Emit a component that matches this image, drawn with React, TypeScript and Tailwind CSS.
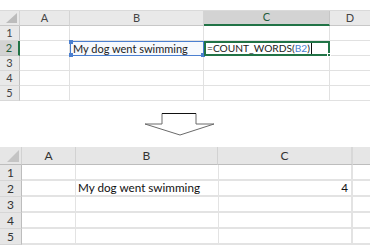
import React from 'react';

const font = { fontFamily: 'Lato, "Open Sans", sans-serif' };

function TopSheet() {
  const rows = [1, 2, 3, 4, 5];
  return (
    <div className="text-[11px] text-[#222]">
      {/* formula bar edge */}
      <div className="h-[11px] border-b border-[#dadada] bg-white" />

      {/* column headers */}
      <div className="flex h-[15px] bg-[#e9e9e9] text-[11px] text-[#444]">
        <div className="relative w-[20px] shrink-0 border-r border-[#d4d4d4] border-b border-b-[#c8c8c8]">
          <svg className="absolute right-[2px] bottom-[2px]" width="11" height="10" viewBox="0 0 11 10">
            <polygon points="11,0 11,10 0,10" fill="#bcbcbc" />
          </svg>
        </div>
        <div className="flex w-[50px] shrink-0 items-center justify-center border-r border-[#d4d4d4] border-b border-b-[#c8c8c8]">A</div>
        <div className="flex w-[134px] shrink-0 items-center justify-center border-r border-[#d4d4d4] border-b border-b-[#c8c8c8]">B</div>
        <div className="flex w-[126px] shrink-0 items-center justify-center border-r border-[#c6c6c6] border-b-2 border-b-[#217346] bg-[#d3d3d3] text-[#1f5c3a]">C</div>
        <div className="flex flex-1 items-center justify-center border-b border-b-[#c8c8c8]">D</div>
      </div>

      {rows.map((r) => {
        const sel = r === 2;
        return (
          <div key={r} className="flex h-[15px]">
            <div
              className={
                sel
                  ? 'flex w-[20px] shrink-0 items-center justify-center border-r-2 border-[#217346] border-b border-b-[#c8c8c8] bg-[#d3d3d3] text-[11px] text-[#1f5c3a]'
                  : 'flex w-[20px] shrink-0 items-center justify-center border-r border-[#c0c0c0] border-b border-b-[#d8d8d8] bg-[#e9e9e9] text-[11px] text-[#444]'
              }
            >
              {r}
            </div>
            <div className="w-[50px] shrink-0 border-r border-[#e1e1e1] border-b border-b-[#e1e1e1]" />
            {sel ? (
              <>
                <div className="relative flex w-[134px] shrink-0 items-center border border-[#4a7fd0] bg-[#f6f9fd] pl-[2px] leading-none">
                  <span className="absolute -left-[2px] -top-[2px] h-[4px] w-[4px] bg-[#4a7fd0]" />
                  <span className="absolute -left-[2px] -bottom-[2px] h-[4px] w-[4px] bg-[#4a7fd0]" />
                  <span className="absolute -right-[2px] -bottom-[2px] h-[4px] w-[4px] bg-[#4a7fd0]" />
                  My dog went swimming
                </div>
                <div className="relative flex w-[126px] shrink-0 items-center border-2 border-[#217346] pl-[1px] text-[10.2px] leading-none">
                  =COUNT_WORDS(<span className="text-[#4a7fd0]">B2</span>)
                  <span className="ml-[1px] h-[11px] w-px bg-[#111]" />
                  <span className="absolute -right-[3px] -bottom-[3px] h-[4px] w-[4px] border border-white bg-[#217346]" />
                </div>
              </>
            ) : (
              <>
                <div className="w-[134px] shrink-0 border-r border-[#e1e1e1] border-b border-b-[#e1e1e1]" />
                <div className="w-[126px] shrink-0 border-r border-[#e1e1e1] border-b border-b-[#e1e1e1]" />
              </>
            )}
            <div className="flex-1 border-b border-b-[#e1e1e1]" />
          </div>
        );
      })}
    </div>
  );
}

function BottomSheet() {
  const rows = [1, 2, 3, 4, 5];
  return (
    <div className="text-[11.7px] text-[#111]">
      <div className="flex h-[18px] bg-[#e6e6e6] text-[12px] text-[#333]">
        <div className="relative w-[22px] shrink-0 border-r border-[#d2d2d2] border-b border-b-[#bdbdbd]">
          <svg className="absolute right-[2px] bottom-[2px]" width="12" height="12" viewBox="0 0 12 12">
            <polygon points="12,0 12,12 0,12" fill="#c4c4c4" />
          </svg>
        </div>
        <div className="flex w-[54px] shrink-0 items-center justify-center border-r border-[#d2d2d2] border-b border-b-[#bdbdbd]">A</div>
        <div className="flex w-[142px] shrink-0 items-center justify-center border-r border-[#d2d2d2] border-b border-b-[#bdbdbd]">B</div>
        <div className="flex w-[135px] shrink-0 items-center justify-center border-r-2 border-[#d8d8d8] border-b border-b-[#bdbdbd]">C</div>
        <div className="flex-1 border-b border-b-[#bdbdbd]" />
      </div>
      {rows.map((r) => (
        <div key={r} className="flex h-[16px]">
          <div className="flex w-[22px] shrink-0 items-center justify-center border-r border-[#bdbdbd] border-b border-b-[#d6d6d6] bg-[#e6e6e6] text-[12px] text-[#333]">
            {r}
          </div>
          <div className="w-[54px] shrink-0 border-r border-[#e3e3e3] border-b-2 border-b-[#e3e3e3]" />
          <div className="flex w-[142px] shrink-0 items-center overflow-visible whitespace-nowrap border-b-2 border-b-[#e3e3e3] pl-[2px] leading-none">
            {r === 2 ? 'My dog went swimming' : ''}
          </div>
          <div className="flex w-[135px] shrink-0 items-center justify-end border-l border-[#e3e3e3] border-r-2 border-r-[#e3e3e3] border-b-2 border-b-[#e3e3e3] pr-[3px] leading-none">
            {r === 2 ? '4' : ''}
          </div>
          <div className="flex-1 border-b-2 border-b-[#e3e3e3]" />
        </div>
      ))}
    </div>
  );
}

export default function App() {
  return (
    <div className="h-[248px] w-[370px] overflow-hidden bg-white" style={font}>
      <TopSheet />
      <div className="h-[46px] pt-[12px]">
        <svg className="ml-[144px]" width="72" height="24" viewBox="0 0 72 24">
          <polygon points="18,0.5 52,0.5 52,11 70,11 36,22 1,11 18,11" fill="white" stroke="#6a6a6a" strokeWidth="1" />
          <line x1="18" y1="0.5" x2="52" y2="0.5" stroke="#111" strokeWidth="1" />
        </svg>
      </div>
      <BottomSheet />
    </div>
  );
}
